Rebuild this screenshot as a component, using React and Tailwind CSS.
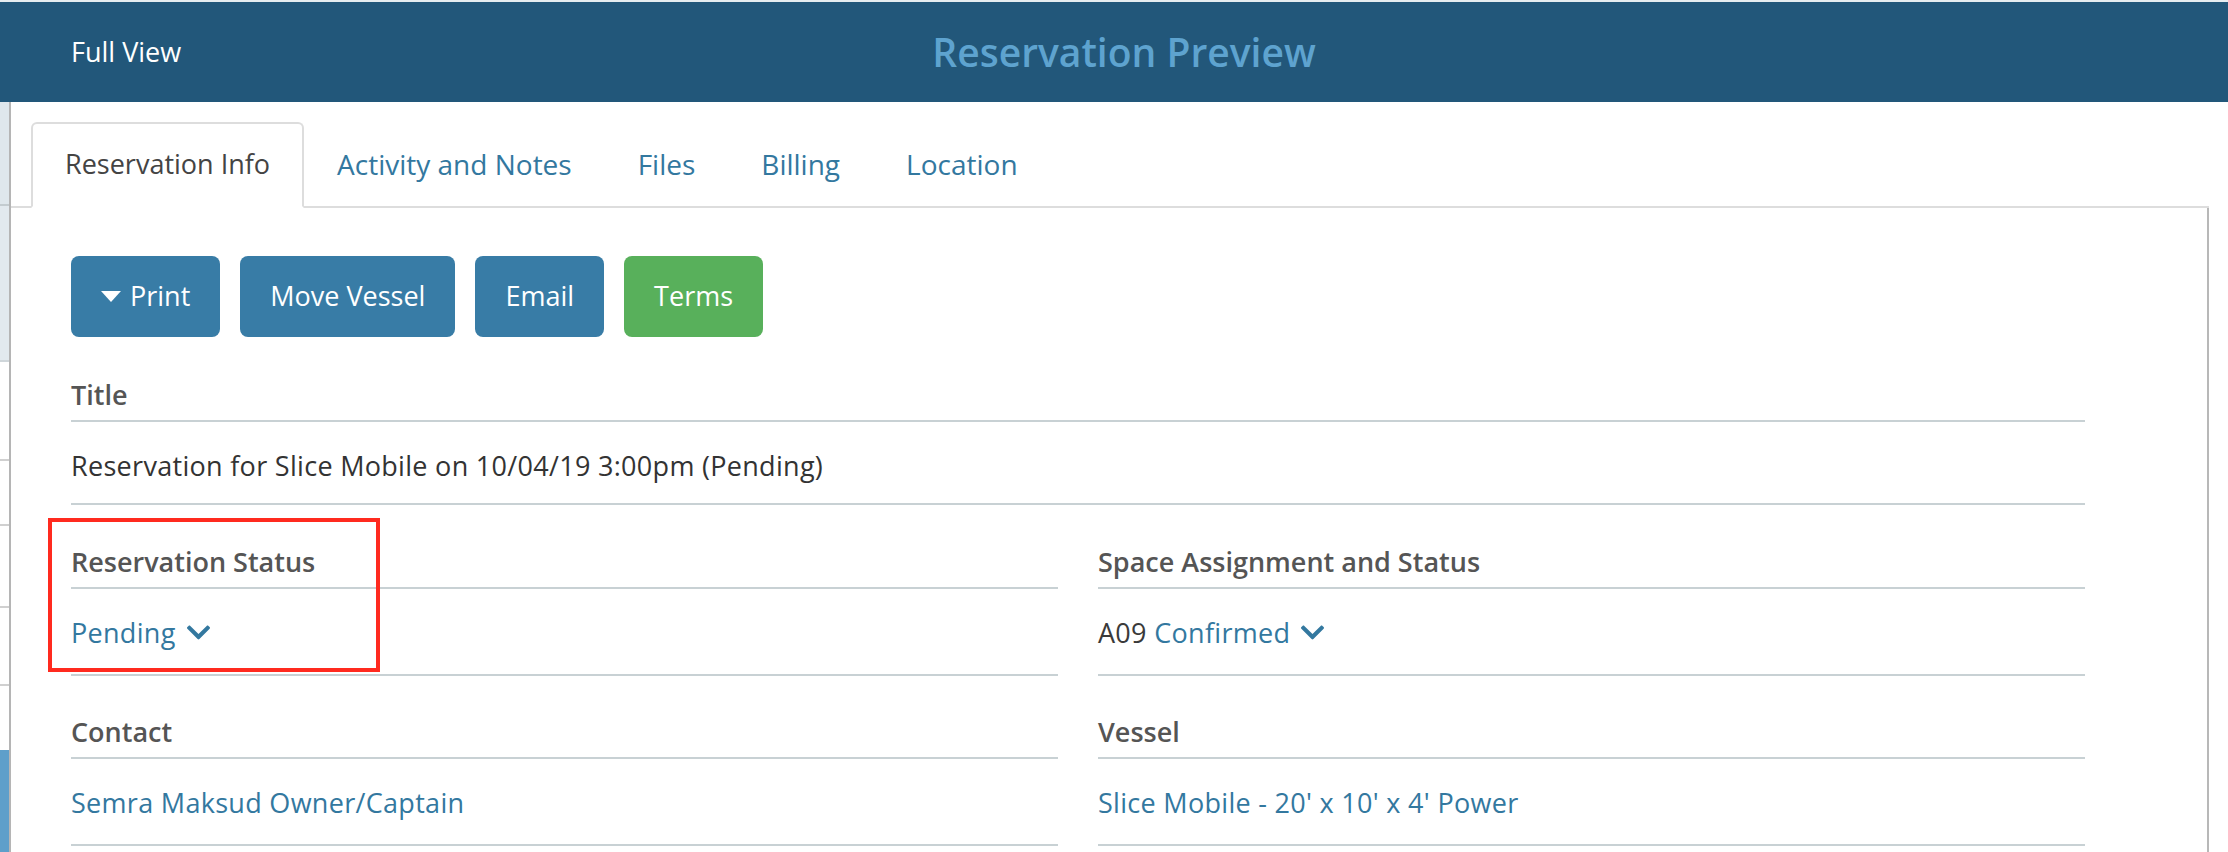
import React from "react";
import { FaChevronDown } from "react-icons/fa";

const LINE = "border-b-2 border-[#c8d1d4]";

function Field({ label, children, labelMt = "mt-[40px]", valuePb = "pb-[24px]" }) {
  return (
    <div>
      <div className={`${labelMt} pb-[8px] ${LINE} text-[27px] leading-[34px] font-semibold text-[#555555]`}>
        {label}
      </div>
      <div className={`pt-[27px] ${valuePb} ${LINE} text-[27px] leading-[34px] tracking-[0.3px] text-[#333333]`}>
        {children}
      </div>
    </div>
  );
}

function Chevron() {
  return <FaChevronDown className="inline-block ml-[9px] text-[#33789f] align-[-3px]" size={27} />;
}

function Button({ children, green }) {
  return (
    <button
      className={`h-[81px] px-[30px] rounded-[8px] text-white text-[27px] flex items-center gap-[9px] ${
        green ? "bg-[#58b05b]" : "bg-[#387ca6]"
      }`}
    >
      {children}
    </button>
  );
}

export default function App() {
  const tabs = ["Activity and Notes", "Files", "Billing", "Location"];
  return (
    <div className="relative w-[2228px] h-[852px] overflow-hidden bg-white font-['Open_Sans',sans-serif]">
      <div className="h-[2px] bg-[#e6edf0]" />
      <header className="h-[100px] bg-[#22577a] grid grid-cols-[1fr_auto_1fr] items-center">
        <span className="pl-[71px] text-white text-[27px]">Full View</span>
        <h1 className="pl-[20px] text-[39px] font-semibold text-[#5ea3cf]">Reservation Preview</h1>
        <span />
      </header>

      <div className="flex h-[750px]">
        {/* background page strip */}
        <div className="w-[9px] flex flex-col">
          <div className="h-[104px] bg-[#dfe7ec] border-b-2 border-[#c3cbcf]" />
          <div className="h-[156px] bg-[#e2e9ee] border-b-2 border-[#cfd6da]" />
          <div className="h-[99px] border-b-2 border-[#d0d0d0]" />
          <div className="h-[65px] border-b-2 border-[#d0d0d0]" />
          <div className="h-[82px] border-b-2 border-[#d0d0d0]" />
          <div className="h-[78px] border-b-2 border-[#d0d0d0]" />
          <div className="h-[64px]" />
          <div className="flex-1 bg-[#5e9fca]" />
        </div>

        <div className="flex-1 border-l-2 border-[#b5b5b5] flex flex-col">
          {/* tabs */}
          <div className="flex items-end pl-[20px] pt-[20px] mr-[19px] border-b-2 border-[#dddddd]">
            <div className="-mb-[2px] h-[86px] px-[32px] pb-[2px] flex items-center border-2 border-[#dddddd] border-b-white rounded-t-[6px] bg-white text-[27px] text-[#444444]">
              Reservation Info
            </div>
            {tabs.map((t) => (
              <div
                key={t}
                className="-mb-[2px] h-[86px] px-[31px] pb-[2px] flex items-center border-2 border-transparent text-[28px] text-[#33789f]"
              >
                {t}
              </div>
            ))}
          </div>

          {/* panel */}
          <div className="flex-1 mr-[19px] border-r-2 border-[#b8b8b8] pl-[60px] pt-[48px]">
            <div className="w-[2014px]">
              <div className="flex gap-[20px]">
                <Button>
                  <svg width="20" height="11" viewBox="0 0 20 11">
                    <polygon points="0,0 20,0 10,11" fill="white" />
                  </svg>
                  Print
                </Button>
                <Button>Move Vessel</Button>
                <Button>Email</Button>
                <Button green>Terms</Button>
              </div>

              <Field label="Title" labelMt="mt-[41px]" valuePb="pb-[20px]">
                Reservation for Slice Mobile on 10/04/19 3:00pm (Pending)
              </Field>

              <div className="grid grid-cols-2 gap-x-[40px]">
                <Field label="Reservation Status">
                  <span className="text-[#33789f]">Pending</span>
                  <Chevron />
                </Field>
                <Field label="Space Assignment and Status">
                  <span className="text-[#3a3a3a]">A09</span>{" "}
                  <span className="text-[#33789f]">Confirmed</span>
                  <Chevron />
                </Field>
                <Field label="Contact" labelMt="mt-[39px]">
                  <span className="text-[#33789f]">Semra Maksud Owner/Captain</span>
                </Field>
                <Field label="Vessel" labelMt="mt-[39px]">
                  <span className="text-[#33789f]">Slice Mobile - 20' x 10' x 4' Power</span>
                </Field>
              </div>
            </div>
          </div>
        </div>
      </div>

      {/* annotation box */}
      <div className="absolute left-[48px] top-[518px] w-[332px] h-[154px] border-[4px] border-[#ff2a1f] pointer-events-none" />
    </div>
  );
}
